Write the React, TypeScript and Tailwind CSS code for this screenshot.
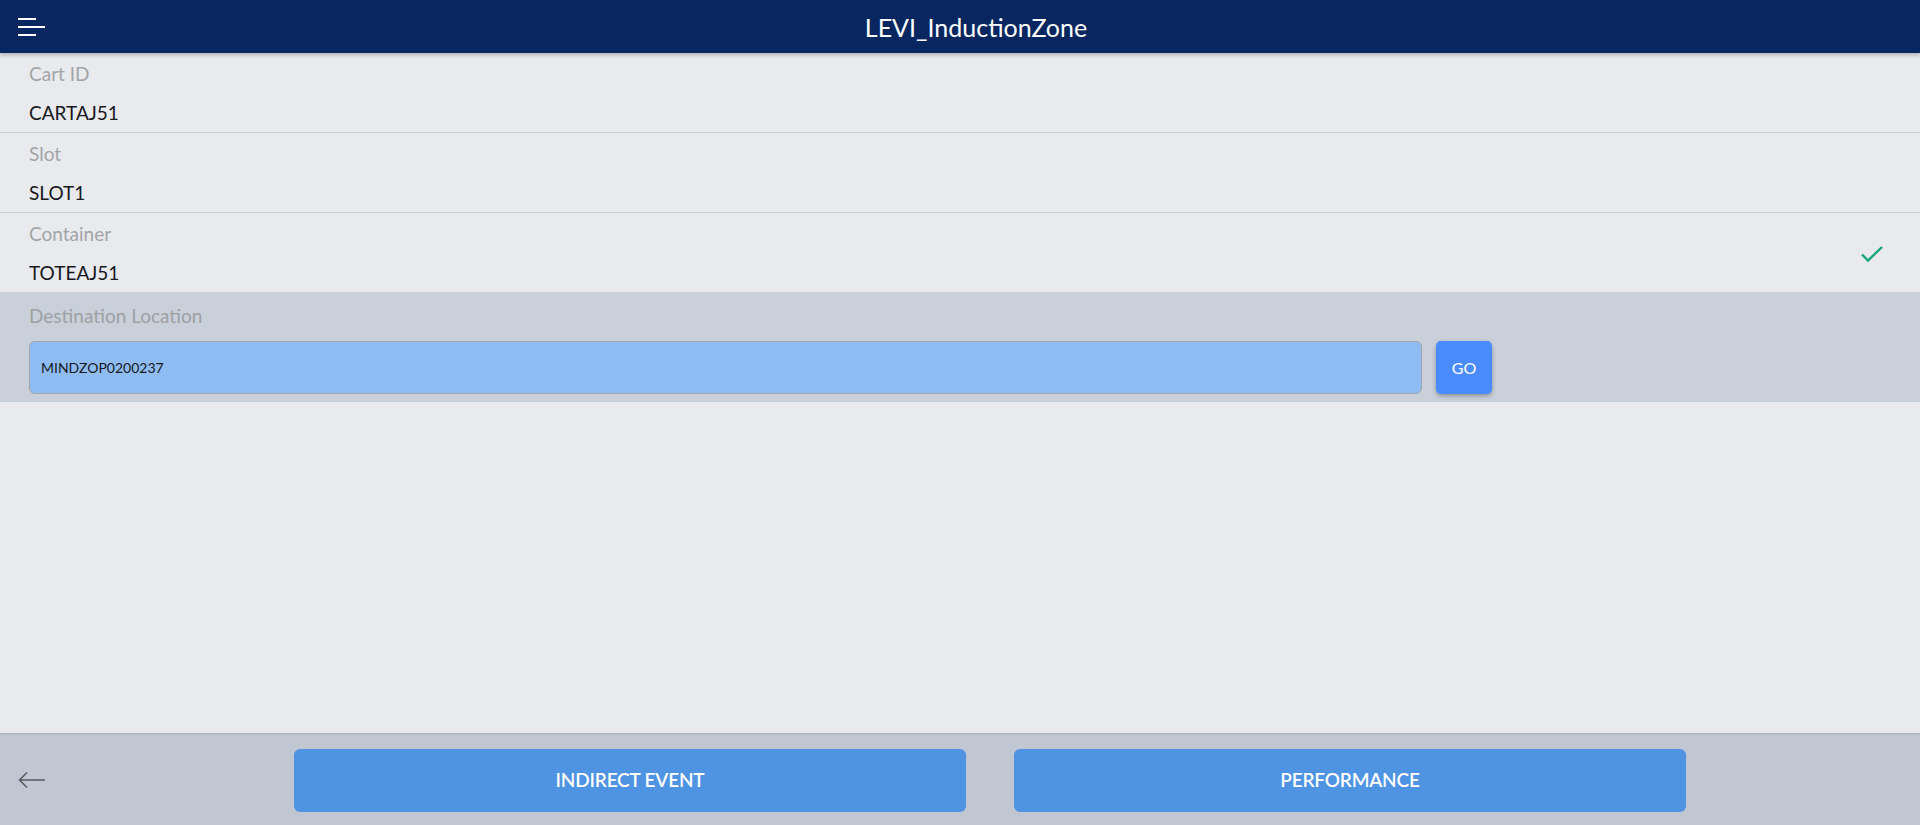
import React from "react";

const font = { fontFamily: "Lato, 'Noto Sans', sans-serif" };

function Row({ label, value, check }: { label: string; value: string; check?: boolean }) {
  return (
    <div className="h-[80px] border-b border-[#cfd0d4] flex items-stretch">
      <div className="flex-1 pl-[29px] flex flex-col">
        <div className="mt-[10px] h-[22px] text-[19px] leading-[22px] text-[#a3a4a6]">{label}</div>
        <div className="mt-[17px] h-[22px] text-[19px] leading-[22px] text-[#16181c]">{value}</div>
      </div>
      {check && (
        <div className="w-[96px] flex items-center justify-center pt-[2px]">
          <svg width="24" height="18" viewBox="0 0 24 18" fill="none">
            <path d="M2 9.5 L8 15.5 L22 2" stroke="#19a57b" strokeWidth="2.4" />
          </svg>
        </div>
      )}
    </div>
  );
}

export default function App() {
  return (
    <div className="w-[1920px] h-[825px] flex flex-col bg-[#e9eaee] overflow-hidden" style={font}>
      <header className="h-[53px] shrink-0 bg-[#08265f] flex items-center relative z-10 shadow-[0_2px_4px_rgba(0,0,0,0.25)]">
        <div className="w-[60px] pl-[18px] flex flex-col gap-[6px]">
          <div className="w-[18px] h-[2px] bg-white"></div>
          <div className="w-[27px] h-[2px] bg-white"></div>
          <div className="w-[18px] h-[2px] bg-white"></div>
        </div>
        <div className="flex-1 text-center text-white text-[25px] leading-[30px] pr-[28px]">LEVI_InductionZone</div>
      </header>
      <main className="flex-1 flex flex-col">
        <Row label="Cart ID" value="CARTAJ51" />
        <Row label="Slot" value="SLOT1" />
        <Row label="Container" value="TOTEAJ51" check />
        <div className="h-[109px] bg-[#c9d0da] pl-[29px] flex flex-col">
          <div className="mt-[12px] h-[22px] text-[19px] leading-[22px] text-[#9ea0a3]">Destination Location</div>
          <div className="mt-[14px] flex items-center gap-[14px]">
            <div className="w-[1393px] h-[53px] bg-[#8fbdf3] border border-[#a1a5ab] rounded-[6px] flex items-center pl-[11px] text-[14px] text-[#15171b]">
              MINDZOP0200237
            </div>
            <button className="w-[56px] h-[53px] bg-[#4a8cff] rounded-[5px] text-white text-[16px] shadow-[0_2px_4px_rgba(0,0,0,0.3)]">
              GO
            </button>
          </div>
        </div>
      </main>
      <footer className="h-[92px] shrink-0 bg-[#c0c6d2] border-t-2 border-[#b4b9c2] flex items-center">
        <div className="w-[294px] pl-[18px] flex items-center">
          <svg width="28" height="18" viewBox="0 0 28 18" fill="none">
            <path d="M27 9 H2 M9 1.5 L1.5 9 L9 16.5" stroke="#55585e" strokeWidth="1.5" />
          </svg>
        </div>
        <div className="flex gap-[48px]">
          <button className="w-[672px] h-[63px] bg-[#4f93e3] rounded-[6px] text-white text-[19px] font-semibold tracking-[-0.2px]">
            INDIRECT EVENT
          </button>
          <button className="w-[672px] h-[63px] bg-[#4f93e3] rounded-[6px] text-white text-[19px] font-semibold tracking-[-0.2px]">
            PERFORMANCE
          </button>
        </div>
      </footer>
    </div>
  );
}
